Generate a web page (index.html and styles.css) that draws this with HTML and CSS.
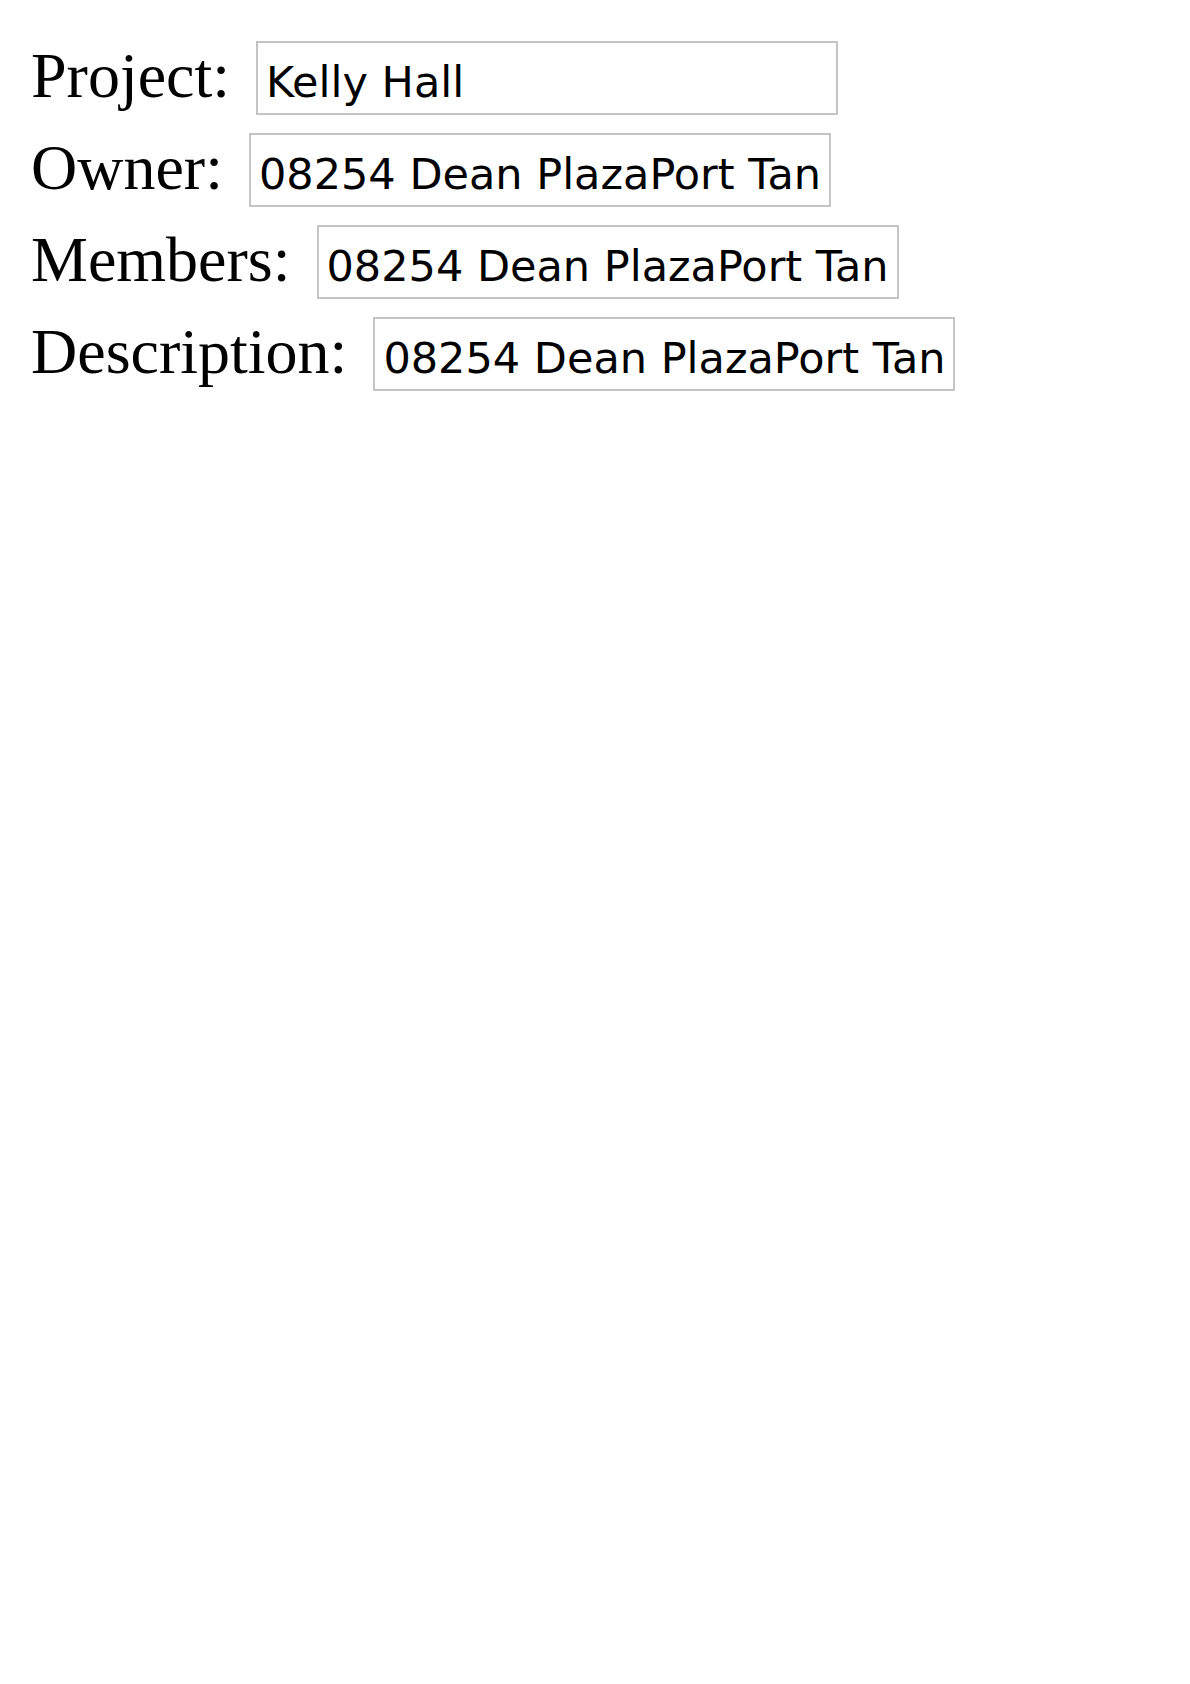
FILE: index.html
```html
<!DOCTYPE html>
<html>
<head>
<meta charset="utf-8">
<link rel="stylesheet" href="styles.css">
</head>
<body>
<form class="project-form">
  <div class="field">
    <label class="field-label" for="project">Project:</label>
    <input class="field-input" id="project" type="text" value="Kelly Hall">
  </div>
  <div class="field">
    <label class="field-label" for="owner">Owner:</label>
    <input class="field-input" id="owner" type="text" value="08254 Dean PlazaPort Tan">
  </div>
  <div class="field">
    <label class="field-label" for="members">Members:</label>
    <input class="field-input" id="members" type="text" value="08254 Dean PlazaPort Tan">
  </div>
  <div class="field">
    <label class="field-label" for="description">Description:</label>
    <input class="field-input" id="description" type="text" value="08254 Dean PlazaPort Tan">
  </div>
</form>
</body>
</html>
```
FILE: styles.css
```css
html, body {
  margin: 0;
  padding: 0;
  background: #ffffff;
}

.project-form {
  display: flex;
  flex-direction: column;
  gap: 18px;
  padding: 41px 0 0 31px;
}

.field {
  display: flex;
  align-items: baseline;
  gap: 26px;
}

.field-label {
  font-family: "Liberation Serif", "Times New Roman", serif;
  font-size: 64px;
  line-height: 64px;
  color: #000;
}

.field-input {
  box-sizing: border-box;
  width: 582px;
  height: 74px;
  margin: 0;
  padding: 14px 6px 7px 8px;
  border: 2px solid #c4c4c4;
  border-radius: 0;
  outline: none;
  background: #fff;
  color: #000;
  font-family: "DejaVu Sans", sans-serif;
  font-size: 43px;
  line-height: 49px;
}
```
